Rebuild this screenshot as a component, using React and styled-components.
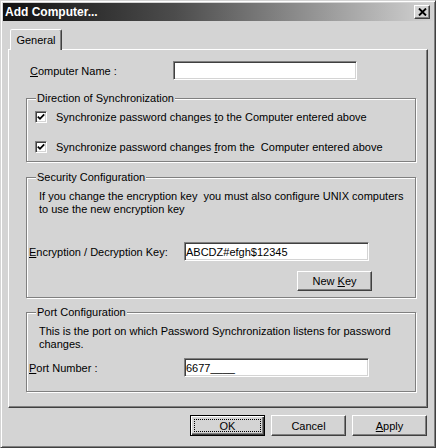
import React from 'react'
import styled, { createGlobalStyle } from 'styled-components'

const face = '#d4d4d4'
const shadow = '#808080'
const dark = '#404040'

const GlobalStyle = createGlobalStyle`
    html, body {
        margin: 0;
        padding: 0;
        background: ${face};
    }
    body {
        font-family: "Liberation Sans", Arial, sans-serif;
        font-size: 11px;
        color: #000;
    }
    * {
        box-sizing: border-box;
    }
`

const Window = styled.div`
    width: 436px;
    height: 448px;
    display: flex;
    flex-direction: column;
    padding: 2px;
    background: ${face};
    border: 1px solid;
    border-color: ${face} ${dark} ${dark} ${face};
    box-shadow: inset 1px 1px 0 #fff, inset -1px -1px 0 ${shadow};
`

const TitleBar = styled.div`
    height: 18px;
    display: flex;
    align-items: center;
    justify-content: space-between;
    padding: 0 3px 0 2px;
    background: linear-gradient(to right, #111 0%, #4c4c4c 40%, #d2d2d2 100%);
`

const Title = styled.span`
    font-size: 12px;
    font-weight: bold;
    color: #fff;
`

const CloseButton = styled.div`
    width: 16px;
    height: 14px;
    display: flex;
    align-items: center;
    justify-content: center;
    background: ${face};
    border: 1px solid;
    border-color: #fff ${dark} ${dark} #fff;
    box-shadow: inset -1px -1px 0 ${shadow};
`

const Body = styled.div`
    display: flex;
    flex-direction: column;
    padding: 8px 5px 0;
`

const TabStrip = styled.div`
    display: flex;
    padding-left: 2px;
    margin-bottom: -1px;
    position: relative;
    z-index: 1;
`

const Tab = styled.div`
    width: 52px;
    height: 21px;
    display: flex;
    align-items: center;
    justify-content: center;
    background: ${face};
    border: 1px solid;
    border-bottom: none;
    border-color: #fff ${dark} transparent #fff;
    border-radius: 2px 2px 0 0;
    box-shadow: inset -1px 0 0 ${shadow};
`

const Panel = styled.div`
    display: flex;
    flex-direction: column;
    padding: 0 11px 15px 17px;
    border: 1px solid;
    border-color: #fff ${dark} ${dark} #fff;
    box-shadow: inset -1px -1px 0 ${shadow};
`

const FieldRow = styled.div`
    display: grid;
    grid-template-columns: ${p => p.$label}px ${p => p.$field}px;
    align-items: center;
    margin-top: ${p => p.$top}px;
    padding-left: ${p => p.$indent}px;
`

const Label = styled.label`
    white-space: nowrap;
`

const Key = styled.span`
    text-decoration: underline;
`

const TextBox = styled.input`
    height: 19px;
    width: 100%;
    padding: 0 1px;
    font: 11px "Liberation Sans", Arial, sans-serif;
    color: #000;
    background: #fff;
    border: 1px solid;
    border-color: ${shadow} #fff #fff ${shadow};
    box-shadow: inset 1px 1px 0 ${dark}, inset -1px -1px 0 ${face};
    outline: none;
`

const Group = styled.fieldset`
    margin: ${p => p.$top}px 0 0;
    padding: 0 0 ${p => p.$bottom}px;
    min-width: 0;
    border: 1px solid ${shadow};
    box-shadow: inset 1px 1px 0 #fff, 1px 1px 0 #fff;
`

const Legend = styled.legend`
    margin-left: 9px;
    padding: 0 1px;
    line-height: 14px;
    background: ${face};
`

const CheckRow = styled.div`
    height: 16px;
    display: flex;
    align-items: center;
    gap: 9px;
    margin-top: ${p => p.$top}px;
    padding-left: 8px;
    white-space: nowrap;
`

const CheckBox = styled.span`
    width: 12px;
    height: 12px;
    flex: none;
    display: flex;
    align-items: center;
    justify-content: center;
    background: #fff;
    border: 1px solid;
    border-color: ${shadow} #fff #fff ${shadow};
    box-shadow: inset 1px 1px 0 ${dark}, inset -1px -1px 0 ${face};
`

const Note = styled.p`
    margin: ${p => p.$top}px 0 0 12px;
    line-height: 13px;
    white-space: nowrap;
`

const ButtonRow = styled.div`
    display: flex;
    justify-content: flex-end;
    gap: 6px;
    margin-top: ${p => p.$top || 0}px;
    padding-right: ${p => p.$right || 0}px;
`

const Button = styled.button`
    width: 75px;
    height: ${p => p.$height || 21}px;
    padding: 0;
    display: flex;
    align-items: center;
    justify-content: center;
    font: 11px "Liberation Sans", Arial, sans-serif;
    color: #000;
    background: ${face};
    border: 1px solid;
    border-color: ${p => p.$default ? '#000' : `#fff ${dark} ${dark} #fff`};
    box-shadow: ${p => p.$default
        ? `inset 1px 1px 0 #fff, inset -1px -1px 0 ${dark}, inset -2px -2px 0 ${shadow}`
        : `inset -1px -1px 0 ${shadow}`};
`

const FocusRing = styled.span`
    flex: 1;
    align-self: stretch;
    margin: 3px;
    display: flex;
    align-items: center;
    justify-content: center;
    border: 1px dotted #000;
`

const Check = () => (
    <svg width="8" height="8" viewBox="0 0 8 8">
        <polyline points="0.8,3.6 3,5.8 7.2,1.4" fill="none" stroke="#000" strokeWidth="1.8" />
    </svg>
)

const CloseGlyph = () => (
    <svg width="9" height="8" viewBox="0 0 9 8">
        <path d="M1 0.5 L8 7.5 M8 0.5 L1 7.5" stroke="#000" strokeWidth="1.9" />
    </svg>
)

export default function App() {
    return (
        <Window>
            <GlobalStyle />
            <TitleBar>
                <Title>Add Computer...</Title>
                <CloseButton><CloseGlyph /></CloseButton>
            </TitleBar>

            <Body>
                <TabStrip>
                    <Tab>General</Tab>
                </TabStrip>

                <Panel>
                    <FieldRow $top={11} $indent={4} $label={143} $field={184}>
                        <Label><Key>C</Key>omputer Name :</Label>
                        <TextBox type="text" defaultValue="" />
                    </FieldRow>

                    <Group $top={11} $bottom={6}>
                        <Legend>Direction of Synchronization</Legend>
                        <CheckRow $top={4}>
                            <CheckBox><Check /></CheckBox>
                            <span>Synchronize password changes <Key>t</Key>o the Computer entered above</span>
                        </CheckRow>
                        <CheckRow $top={14}>
                            <CheckBox><Check /></CheckBox>
                            <span>Synchronize password changes <Key>f</Key>rom the&nbsp; Computer entered above</span>
                        </CheckRow>
                    </Group>

                    <Group $top={8} $bottom={6}>
                        <Legend>Security Configuration</Legend>
                        <Note $top={6}>
                            If you change the encryption key&nbsp; you must also configure UNIX computers<br />
                            to use the new encryption key
                        </Note>
                        <FieldRow $top={26} $indent={2} $label={155} $field={185}>
                            <Label><Key>E</Key>ncryption / Decryption Key:</Label>
                            <TextBox type="text" defaultValue="ABCDZ#efgh$12345" />
                        </FieldRow>
                        <ButtonRow $top={10} $right={43}>
                            <Button $height={20}><span>New <Key>K</Key>ey</span></Button>
                        </ButtonRow>
                    </Group>

                    <Group $top={7} $bottom={14}>
                        <Legend>Port Configuration</Legend>
                        <Note $top={6}>
                            This is the port on which Password Synchronization listens for password<br />
                            changes.
                        </Note>
                        <FieldRow $top={7} $indent={2} $label={155} $field={185}>
                            <Label><Key>P</Key>ort Number :</Label>
                            <TextBox type="text" defaultValue="6677____" />
                        </FieldRow>
                    </Group>
                </Panel>

                <ButtonRow $top={7} $right={1}>
                    <Button $default><FocusRing>OK</FocusRing></Button>
                    <Button>Cancel</Button>
                    <Button><span><Key>A</Key>pply</span></Button>
                </ButtonRow>
            </Body>
        </Window>
    )
}
